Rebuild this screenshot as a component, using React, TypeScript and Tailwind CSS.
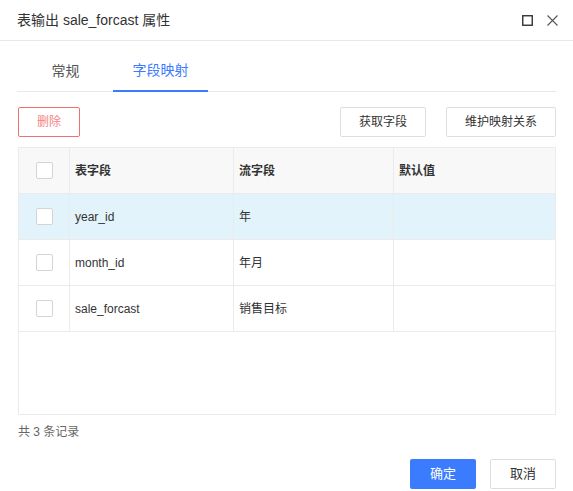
import { useState } from "react";

interface FieldRow {
  id: string;
  tableField: string;
  streamField: string;
  defaultValue: string;
}

const rows: FieldRow[] = [
  { id: "1", tableField: "year_id", streamField: "年", defaultValue: "" },
  { id: "2", tableField: "month_id", streamField: "年月", defaultValue: "" },
  { id: "3", tableField: "sale_forcast", streamField: "销售目标", defaultValue: "" },
];

const cols = "grid grid-cols-[51px_164px_160px_1fr]";

function Checkbox() {
  return <div className="h-[17px] w-[17px] rounded-[2px] border border-[#d4d4d4] bg-white" />;
}

export default function App() {
  const [activeTab, setActiveTab] = useState<"general" | "mapping">("mapping");

  return (
    <div
      className="flex h-[491px] w-[573px] flex-col bg-white text-[#333]"
      style={{ fontFamily: '"Liberation Sans", "Noto Sans CJK SC", sans-serif' }}
    >
      {/* Header */}
      <header className="flex h-[41px] shrink-0 items-center justify-between border-b border-[#e8e8e8] pl-[17px] pr-[15px]">
        <h1 className="text-[14px] text-[#333]">表输出 sale_forcast 属性</h1>
        <div className="flex items-center gap-[14px]">
          <svg width="11" height="11" viewBox="0 0 11 11" fill="none">
            <rect x="0.75" y="0.75" width="9.5" height="9.5" stroke="#333" strokeWidth="1.4" />
          </svg>
          <svg width="11" height="11" viewBox="0 0 11 11" fill="none">
            <path d="M0.5 0.5L10.5 10.5M10.5 0.5L0.5 10.5" stroke="#555" strokeWidth="1.1" />
          </svg>
        </div>
      </header>

      <div className="flex flex-1 flex-col px-[17px]">
        {/* Tabs */}
        <div className="mt-[10px] flex h-[41px] border-b border-[#e8e8e8] pl-px">
          <button
            onClick={() => setActiveTab("general")}
            className={`-mb-px w-[95px] text-[14px] ${
              activeTab === "general" ? "border-b-2 border-[#3b7cff] text-[#3b7cff]" : "text-[#555]"
            }`}
          >
            常规
          </button>
          <button
            onClick={() => setActiveTab("mapping")}
            className={`-mb-px w-[95px] text-[14px] ${
              activeTab === "mapping" ? "border-b-2 border-[#3b7cff] text-[#3b7cff]" : "text-[#555]"
            }`}
          >
            字段映射
          </button>
        </div>

        {/* Toolbar */}
        <div className="mt-[15px] flex items-center pl-px">
          <button className="h-[30px] w-[62px] rounded-[2px] border border-[#f07070] text-[12px] text-[#f58484]">
            删除
          </button>
          <button className="ml-auto h-[30px] w-[86px] rounded-[2px] border border-[#dedede] text-[12px] text-[#333]">
            获取字段
          </button>
          <button className="ml-[20px] h-[30px] w-[110px] rounded-[2px] border border-[#dedede] text-[12px] text-[#333]">
            维护映射关系
          </button>
        </div>

        {/* Table */}
        <div className="ml-px mt-[10px] flex h-[268px] flex-col border border-[#ebebeb]">
          <div className={`${cols} h-[46px] shrink-0 border-b border-[#ebebeb] bg-[#f8f8f8] text-[12px] font-bold`}>
            <div className="flex items-center justify-center border-r border-[#ebebeb]">
              <Checkbox />
            </div>
            <div className="flex items-center border-r border-[#ebebeb] pl-[5px]">表字段</div>
            <div className="flex items-center border-r border-[#ebebeb] pl-[5px]">流字段</div>
            <div className="flex items-center pl-[5px]">默认值</div>
          </div>
          {rows.map((row, i) => (
            <div
              key={row.id}
              className={`${cols} h-[46px] shrink-0 border-b border-[#ebebeb] text-[12px] text-[#333] ${
                i === 0 ? "bg-[#e3f3fc]" : "bg-white"
              }`}
            >
              <div className="flex items-center justify-center border-r border-[#ebebeb]">
                <Checkbox />
              </div>
              <div className="flex items-center border-r border-[#ebebeb] pl-[5px]">{row.tableField}</div>
              <div className="flex items-center border-r border-[#ebebeb] pl-[5px]">{row.streamField}</div>
              <div className="flex items-center pl-[5px]">{row.defaultValue}</div>
            </div>
          ))}
        </div>

        <p className="ml-px mt-[8px] text-[12px] text-[#666]">共 3 条记录</p>

        {/* Footer */}
        <div className="mt-[18px] flex justify-end gap-[14px]">
          <button className="h-[30px] w-[66px] rounded-[2px] bg-[#3b7cff] text-[13px] text-white">确定</button>
          <button className="h-[30px] w-[66px] rounded-[2px] border border-[#dedede] text-[13px] text-[#333]">
            取消
          </button>
        </div>
      </div>
    </div>
  );
}
